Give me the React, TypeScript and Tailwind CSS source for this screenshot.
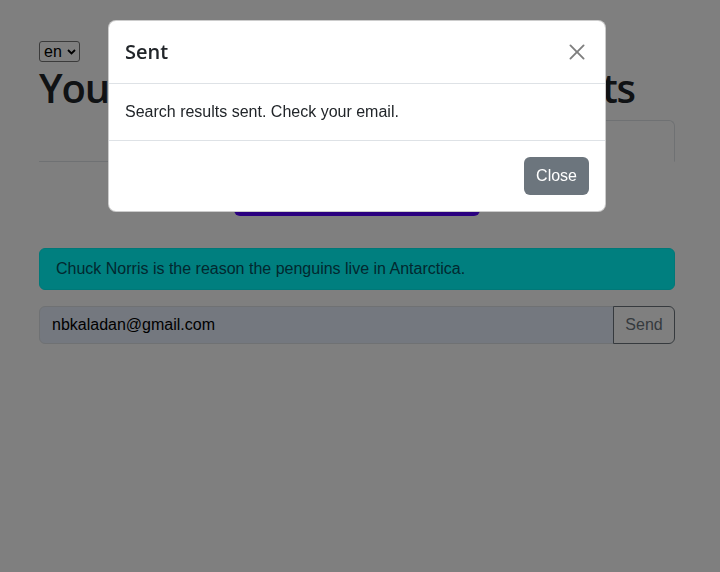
import React from "react";

const font = { fontFamily: '"Liberation Sans", Arial, sans-serif' };
const headFont = { fontFamily: '"Open Sans", "Liberation Sans", sans-serif' };

export default function App() {
  return (
    <div className="relative min-h-screen bg-white text-[#212529]" style={font}>
      <div className="pl-[39px] pr-[45px] pt-[41px]">
        <div className="flex h-[21px] w-[41px] items-center gap-[5px] rounded-[3px] border border-[#767676] pl-[4px] text-[16px] leading-none text-black">
          <span>en</span>
          <svg width="9" height="6" viewBox="0 0 9 6" fill="none">
            <path d="M1 1l3.5 3.5L8 1" stroke="#000" strokeWidth="1.8" />
          </svg>
        </div>
        <h1
          className="mt-[1px] mb-2 h-[49px] text-[40px] font-semibold leading-[49px] tracking-[-1.13px] whitespace-nowrap"
          style={headFont}
        >
          Your Chuck Norris search results
        </h1>
        <div className="flex border-b border-[#dee2e6]">
          <div className="mb-[-1px] flex h-[42px] flex-1 items-center justify-center border border-transparent text-[16px] text-[#0d6efd]">
            Search
          </div>
          <div className="mb-[-1px] flex h-[42px] flex-1 items-center justify-center rounded-t-md border border-[#dee2e6] border-b-white bg-white text-[16px] text-[#495057]">
            Results
          </div>
        </div>
        <div className="mt-4 flex justify-center">
          <button className="h-[38px] w-[246px] rounded-md bg-[#5500ff] text-[16px] text-white">
            Get joke
          </button>
        </div>
        <div className="mt-8 rounded-md border border-[#00f0f0] bg-[#00ffff] px-4 py-2 text-[16px] leading-6 text-[#055160]">
          Chuck Norris is the reason the penguins live in Antarctica.
        </div>
        <div className="mt-4 flex h-[38px]">
          <div className="flex flex-1 items-center rounded-l-md border border-[#dee2e6] bg-[#e8f0fe] px-3 text-[16px] text-black">
            nbkaladan@gmail.com
          </div>
          <button className="ml-[-1px] h-[38px] w-[62px] rounded-r-md border border-[#6c757d] text-[16px] text-[#6c757d]">
            Send
          </button>
        </div>
      </div>

      <div className="fixed inset-0 bg-black/50">
        <div className="absolute left-[108px] top-[20px] w-[498px] rounded-lg border border-black/20 bg-white">
          <div className="flex items-center justify-between border-b border-[#dee2e6] p-4">
            <div className="text-[20px] font-semibold leading-[30px]" style={headFont}>
              Sent
            </div>
            <div className="flex h-6 w-6 items-center justify-center opacity-50">
              <svg width="16" height="16" viewBox="0 0 16 16" fill="#000">
                <path d="M.293.293a1 1 0 0 1 1.414 0L8 6.586 14.293.293a1 1 0 1 1 1.414 1.414L9.414 8l6.293 6.293a1 1 0 0 1-1.414 1.414L8 9.414l-6.293 6.293a1 1 0 0 1-1.414-1.414L6.586 8 .293 1.707a1 1 0 0 1 0-1.414z" transform="translate(0.5 0.5) scale(0.94)" />
              </svg>
            </div>
          </div>
          <div className="p-4 text-[16px] leading-6">Search results sent. Check your email.</div>
          <div className="flex justify-end border-t border-[#dee2e6] p-3">
            <button className="m-1 h-[38px] rounded-md bg-[#6c757d] px-3 text-[16px] text-white">
              Close
            </button>
          </div>
        </div>
      </div>
    </div>
  );
}
